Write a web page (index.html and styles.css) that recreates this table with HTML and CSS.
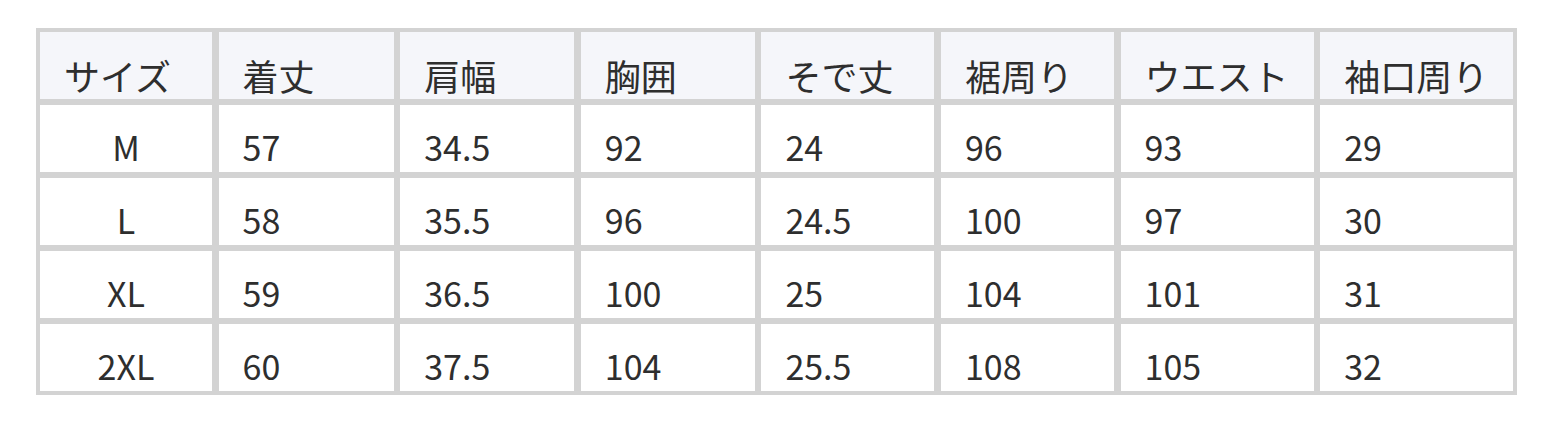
FILE: index.html
```html
<!DOCTYPE html>
<html lang="ja">
<head>
<meta charset="utf-8">
<link rel="stylesheet" href="styles.css">
</head>
<body>
<div class="size-table">
  <div class="cell head first">サイズ</div>
  <div class="cell head">着丈</div>
  <div class="cell head">肩幅</div>
  <div class="cell head">胸囲</div>
  <div class="cell head">そで丈</div>
  <div class="cell head">裾周り</div>
  <div class="cell head">ウエスト</div>
  <div class="cell head">袖口周り</div>

  <div class="cell size">M</div>
  <div class="cell">57</div>
  <div class="cell">34.5</div>
  <div class="cell">92</div>
  <div class="cell">24</div>
  <div class="cell">96</div>
  <div class="cell">93</div>
  <div class="cell">29</div>

  <div class="cell size">L</div>
  <div class="cell">58</div>
  <div class="cell">35.5</div>
  <div class="cell">96</div>
  <div class="cell">24.5</div>
  <div class="cell">100</div>
  <div class="cell">97</div>
  <div class="cell">30</div>

  <div class="cell size">XL</div>
  <div class="cell">59</div>
  <div class="cell">36.5</div>
  <div class="cell">100</div>
  <div class="cell">25</div>
  <div class="cell">104</div>
  <div class="cell">101</div>
  <div class="cell">31</div>

  <div class="cell size">2XL</div>
  <div class="cell">60</div>
  <div class="cell">37.5</div>
  <div class="cell">104</div>
  <div class="cell">25.5</div>
  <div class="cell">108</div>
  <div class="cell">105</div>
  <div class="cell">32</div>
</div>
</body>
</html>
```

FILE: styles.css
```css
html, body {
  margin: 0;
  padding: 0;
  background: #ffffff;
}

body {
  padding: 28px 0 0 36px;
  font-family: "Noto Sans CJK JP", "Noto Sans", sans-serif;
  color: #2e2e2e;
}

.size-table {
  display: grid;
  grid-template-columns: 172px 175px 174px 174px 173px 173px 193px 193px;
  grid-auto-rows: 67px;
  column-gap: 6.6px;
  row-gap: 6px;
  width: 1473px;
  padding: 4px;
  background: #d3d3d3;
}

.cell {
  background: #ffffff;
  display: flex;
  align-items: flex-end;
  padding: 0 0 8px 24px;
  font-size: 34px;
  line-height: 1;
  box-sizing: border-box;
}

.head {
  background: #f5f6fa;
  font-size: 36px;
  padding-bottom: 6px;
}

.size {
  justify-content: center;
  padding-left: 0;
}
```
